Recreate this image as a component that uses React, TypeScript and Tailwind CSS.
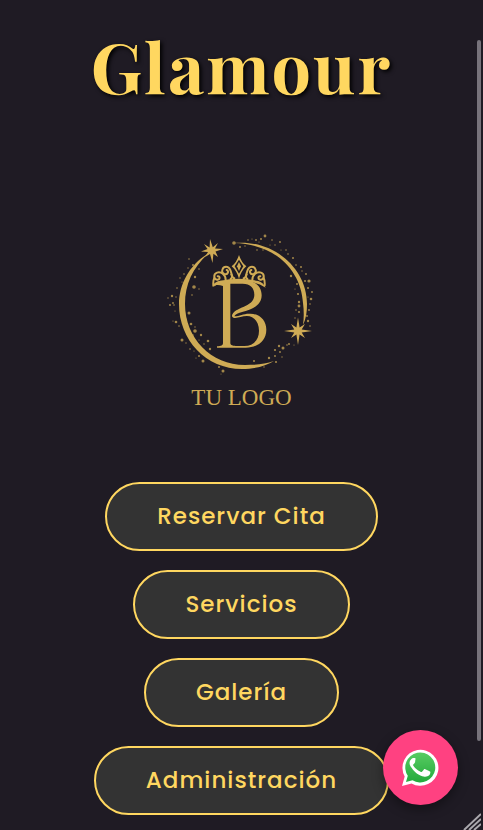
import React from "react";

const GOLD = "#cfab55";

// Dust around the crescent: x, y, radius
const dust: [number, number, number][] = [
  [28, 29, 0.8], [32, 35, 1], [27, 38, 0.7], [23, 44, 0.8], [19, 48, 0.7], [21, 52, 0.6], [34, 47, 1.2], [38, 39, 0.8],
  [33, 57, 1.8], [38, 59, 0.7], [31, 65, 0.8], [16, 58, 0.8], [11, 66, 1.2], [7, 68, 0.7], [15, 67, 0.7], [12, 73, 0.9],
  [9, 75, 1], [13, 75, 0.8], [14, 81, 0.6], [15, 92, 1.3], [18, 96, 0.8], [12, 91, 0.6], [28, 83, 1.5], [25, 89, 0.6],
  [30, 94, 1.3], [34, 97, 0.7], [34, 101, 1.8], [40, 105, 1.2], [32, 105, 0.7], [38, 110, 0.6], [47, 111, 1.3], [43, 114, 0.7],
  [49, 119, 1.2], [21, 110, 1.5], [25, 113, 0.7], [29, 119, 0.8], [33, 121, 0.6], [38, 126, 1], [42, 131, 1.5], [35, 128, 0.6],
  [58, 137, 1], [62, 141, 1.5], [60, 144, 0.5], [93, 131, 1], [103, 137, 0.7], [108, 128, 1.2], [114, 126, 0.9], [115, 132, 1.1],
  [114, 120, 1.1], [118, 116, 1.2], [119, 122, 0.9], [122, 118, 1.5], [121, 127, 0.7], [126, 115, 0.8], [128, 114, 1], [133, 115, 0.6],
  [138, 72, 1.2], [138, 76, 1.4], [135, 80, 0.8], [138, 82, 1.1], [134, 88, 0.7], [146, 86, 0.9], [147, 91, 1.2], [149, 96, 0.8],
  [148, 80, 0.9], [149, 74, 0.8], [150, 69, 1.3], [147, 67, 0.6], [151, 62, 0.9], [147, 58, 1], [148, 51, 1.6], [144, 51, 1],
  [145, 44, 0.9], [141, 41, 0.7], [140, 37, 1], [135, 35, 0.8], [132, 28, 1], [127, 24, 0.8], [125, 20, 0.8], [120, 20, 0.6],
  [119, 12, 0.9], [114, 15, 0.7], [111, 10, 0.8], [109, 15, 0.6], [104, 6, 1.4], [100, 9, 1], [98, 12, 0.6], [95, 10, 0.9],
  [91, 9, 0.6], [87, 10, 0.8], [73, 13, 1.8], [79, 17, 1], [84, 16, 0.7], [96, 20, 0.8], [102, 20, 0.7], [130, 46, 1.2],
  [136, 54, 1], [134, 59, 0.6], [137, 64, 1.1], [132, 39, 0.6],
];

function Emblem() {
  return (
    <svg viewBox="1 0 160 148" className="block w-40" aria-hidden="true" fill={GOLD}>
      <path d="M48 23C29 34 18 54 18 74C18 110 45 139 81 139C94 139 105 136 113 131C104 134 94 135 84 135C50 135 24 108 24 74C24 54 32 37 48 23Z" />
      <path d="M73 13C112 9 146 38 146 74C146 82 145 89 142 95C143 88 143 81 142 73C140 40 114 14 73 13Z" />
      <path d="M49 9L51.8 17.2L57 13L54 18.6L62 19L54.5 21.5L57 27L52.4 23.8L51.5 33L49 24L44 27L47 22L40 21.5L46.5 19L43 14L48.6 17.4Z" />
      <path d="M137 87.500L138.600 97.500L144 94L140.700 99.400L151 101L140.700 102.600L144 108L138.600 104.500L137 115L135.400 104.500L130 108L133.300 102.600L123 101L133.300 99.400L130 94L135.400 97.500Z" />
      {dust.map(([x, y, r]) => (
        <circle key={`${x}-${y}`} cx={x} cy={y} r={r} opacity="0.75" />
      ))}
      <g transform="translate(42 20) scale(.3333)">
        {/* Initial */}
        <path d="M28 110C34 94 48 90 70 93L132 93C158 93 176 111 176 136C176 166 148 178 120 185C105 189 96 193 94 199C112 198 121 190 142 191C172 192 190 213 190 239C190 272 164 293 128 293L42 293L42 289C55 288 60 286 60 278L60 108C46 103 36 104 28 110ZM82 101L82 279C82 286 90 288 103 288L124 288C152 288 168 269 168 242C168 216 153 198 132 198C115 198 103 206 91 203C82 199 89 188 100 181C120 168 154 164 154 134C154 114 142 101 119 101Z" />
        {/* Tiara */}
        <path d="M50 93Q108 80 166 93Q180 97 188 113Q166 98 142 97Q108 91 74 97Q50 98 30 111Q37 98 50 93Z" />
        <path fillRule="evenodd" d="M108 15Q115 37 130 49Q115 62 108 86Q101 62 86 49Q101 37 108 15ZM108 29L95 49L108 71L121 49Z" />
        <path d="M108 36L114 49L108 63L102 49Z" />
        <g fill="none" stroke={GOLD} strokeWidth="6" strokeLinecap="round">
          <path d="M94 85C82 84 89 55 73 51C58 48 52 67 64 72C73 75 80 64 71 60" />
          <path d="M122 85C134 84 127 55 143 51C158 48 164 67 152 72C143 75 136 64 145 60" />
          <path d="M68 90C68 74 54 64 42 68C29 73 33 91 44 89C52 88 51 77 44 79" />
          <path d="M148 90C148 74 162 64 174 68C187 73 183 91 172 89C164 88 165 77 172 79" />
          <path d="M34 84Q30 92 31 106M182 84Q186 92 185 106M83 87Q90 80 85 74M133 87Q126 80 131 74" />
        </g>
      </g>
    </svg>
  );
}

function WhatsAppMark() {
  return (
    <svg viewBox="0 0 38 38" className="size-[38px]" aria-hidden="true">
      <defs>
        <linearGradient id="bubble" x1="0" y1="0" x2="0" y2="1">
          <stop offset="0" stopColor="#58cc62" />
          <stop offset="1" stopColor="#24aa3c" />
        </linearGradient>
      </defs>
      <path fill="#fff" d="M0 37L2.700 27.500A18 18 0 1 1 9.500 34.400Z" />
      <path fill="url(#bubble)" d="M4 33L5.800 26.800A15 15 0 1 1 10.500 31.300Z" />
      <path fill="#fff" d="M13.6 10.8C13.2 10 12.8 10 12.3 10H11.2C10.7 10 10 10.2 9.4 10.9C8.7 11.6 7.5 12.9 7.5 15.1C7.5 17.4 9.4 19.6 9.7 20C10 20.4 13.2 25.4 18.4 27.4C22.7 29.1 23.6 28.7 24.6 28.6C25.5 28.5 27.7 27.3 28 26.1C28.4 24.9 28.4 23.9 28.3 23.7C28.1 23.5 27.7 23.3 27.1 23L23.3 21.2C22.7 21 22.3 20.9 21.9 21.5C21.5 22 20.4 23.3 20 23.8C19.7 24.1 19.4 24.2 18.8 23.9C18.3 23.6 16.5 23 14.3 21.1C12.7 19.7 11.5 17.9 11.2 17.4C10.9 16.8 11.2 16.5 11.5 16.3C11.8 16 12.8 15 13.1 14.2C13.3 13.8 13.2 13.5 13.1 13.2Z" transform="translate(0 -1)" />
    </svg>
  );
}

const actions = ["Reservar Cita", "Servicios", "Galería", "Administración"];

export default function App() {
  return (
    <div className="min-h-screen bg-[#1f1b24] pb-4 text-[#ffd760]">
      <main className="flex flex-col items-center pt-6">
        <h1 className="font-['Playfair_Display','Liberation_Serif',serif] text-[70px] leading-[82px] font-bold tracking-[2px] [text-shadow:2px_2px_4px_#000]">
          Glamour
        </h1>
        <figure className="mt-[124px] flex flex-col items-center">
          <Emblem />
          <figcaption className="mt-1 font-['Liberation_Serif',serif] text-[23px] leading-8 text-[#cfab55]">
            TU LOGO
          </figcaption>
        </figure>
        <nav className="mt-[68px] flex flex-col items-center gap-[19px]">
          {actions.map((label) => (
            <button
              key={label}
              type="button"
              className="h-[69px] rounded-full border-2 border-[#ffd760] bg-[#333333] px-[50px] font-[Poppins,Inter,sans-serif] text-[23px] font-medium tracking-[1px]"
            >
              {label}
            </button>
          ))}
        </nav>
      </main>

      <button
        type="button"
        aria-label="WhatsApp"
        className="fixed right-[25px] bottom-[25px] flex size-[75px] items-center justify-center rounded-full bg-[#ff4181] shadow-[0_4px_12px_rgba(0,0,0,0.4)]"
      >
        <WhatsAppMark />
      </button>

      <div className="fixed top-10 right-0.5 bottom-[89px] w-1 rounded-full bg-[#77737b]" />
      <svg viewBox="0 0 18 18" className="fixed right-0.5 bottom-0 size-[18px]" stroke="#aaa8ad" strokeWidth="2" aria-hidden="true">
        <path d="M1 18L18 2M6 18L18 7M11 18L18 12" />
      </svg>
    </div>
  );
}
